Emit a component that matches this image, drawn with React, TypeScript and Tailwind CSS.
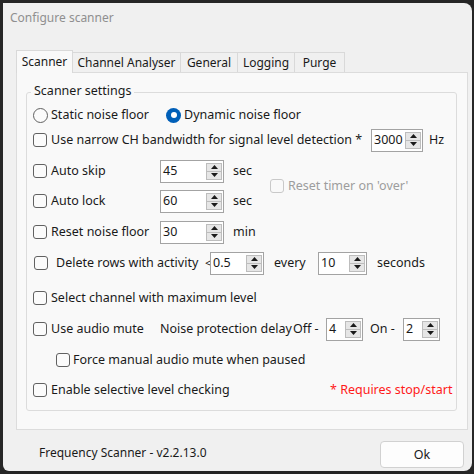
import React from "react";

function Tri({ down }: { down?: boolean }) {
  return (
    <svg width="7" height="4" viewBox="0 0 7 4">
      <polygon points={down ? "0,0 7,0 3.5,4" : "0,4 3.5,0 7,4"} fill="#1a1a1a" />
    </svg>
  );
}

function Spin({ value, w }: { value: string; w: string }) {
  return (
    <div className={"flex h-[23px] shrink-0 items-stretch border border-[#a3a3a3] bg-white " + w}>
      <div className="flex flex-1 items-center pl-[2px] leading-[16px]">{value}</div>
      <div className="flex w-[17px] flex-col py-[2px] pr-[1px]">
        <div className="flex flex-1 items-center justify-center border border-[#bdbdbd] bg-[#e6e6e6]">
          <Tri />
        </div>
        <div className="-mt-px flex flex-1 items-center justify-center border border-[#bdbdbd] bg-[#e6e6e6]">
          <Tri down />
        </div>
      </div>
    </div>
  );
}

function Check({ disabled }: { disabled?: boolean }) {
  return (
    <span
      className={
        disabled
          ? "h-[14px] w-[14px] shrink-0 rounded-[3px] border border-[#c9c9c9] bg-[#f9f9f9]"
          : "h-[14px] w-[14px] shrink-0 rounded-[3px] border border-[#616161] bg-[#fbfbfb]"
      }
    />
  );
}

function Radio({ on }: { on?: boolean }) {
  if (on)
    return (
      <span className="flex h-[15px] w-[15px] shrink-0 items-center justify-center rounded-full bg-[#005fb8]">
        <span className="h-[6px] w-[6px] rounded-full bg-white" />
      </span>
    );
  return <span className="h-[15px] w-[15px] shrink-0 rounded-full border border-[#616161] bg-[#fbfbfb]" />;
}

export default function App() {
  return (
    <div className="h-[474px] w-[474px] bg-[#262626] pl-[3px] pt-[3px] font-['Noto_Sans',sans-serif] text-[#1a1a1a]">
      <div className="flex h-[468px] w-[469px] flex-col rounded-tr-[8px] rounded-br-[8px] rounded-bl-[6px] bg-[#f0f0f0]">
        <div className="flex h-[30px] items-center pl-[7px] text-[12px] text-[#8f8f8f]">Configure scanner</div>

        <div className="mt-[17px] flex h-[22px] items-end pl-[13px] text-[12px] leading-[16px]">
          <div className="relative z-10 -mb-px flex h-[23px] w-[57px] items-center justify-center border border-b-0 border-[#d9d9d9] bg-[#f9f9f9]">
            Scanner
          </div>
          <div className="flex h-[20px] w-[108px] items-center justify-center border border-b-0 border-l-0 border-[#d9d9d9] bg-[#f0f0f0] pt-[1px]">
            Channel Analyser
          </div>
          <div className="flex h-[20px] w-[57px] items-center justify-center border border-b-0 border-l-0 border-[#d9d9d9] bg-[#f0f0f0] pt-[1px]">
            General
          </div>
          <div className="flex h-[20px] w-[57px] items-center justify-center border border-b-0 border-l-0 border-[#d9d9d9] bg-[#f0f0f0] pt-[1px]">
            Logging
          </div>
          <div className="flex h-[20px] w-[50px] items-center justify-center border border-b-0 border-l-0 border-[#d9d9d9] bg-[#f0f0f0] pt-[1px]">
            Purge
          </div>
        </div>

        <div className="ml-[13px] h-[358px] w-[452px] border border-[#dcdcdc] bg-[#f9f9f9] pl-[9px] pt-[19px]">
          <div className="relative h-[319px] w-[431px] rounded-[3px] border border-[#dcdcdc] pl-[6px] pt-[10px] text-[12.5px] leading-[16px]">
            <span className="absolute -top-[11px] left-[4px] bg-[#f9f9f9] px-[3px] leading-[18px]">Scanner settings</span>

            {/* radio row */}
            <div className="flex h-[24px] items-center">
              <div className="flex w-[133px] items-center gap-[3px]">
                <Radio />
                <span>Static noise floor</span>
              </div>
              <div className="flex items-center gap-[3px]">
                <Radio on />
                <span>Dynamic noise floor</span>
              </div>
            </div>

            {/* narrow */}
            <div className="mt-[1px] flex h-[24px] items-center">
              <div className="flex w-[338px] items-center gap-[4px]">
                <Check />
                <span>Use narrow CH bandwidth for signal level detection *</span>
              </div>
              <Spin value="3000" w="w-[52px]" />
              <span className="ml-[6px]">Hz</span>
            </div>

            {/* auto skip / auto lock */}
            <div className="mt-[7px] flex">
              <div className="flex w-[237px] flex-col">
                <div className="flex h-[24px] items-center">
                  <div className="flex w-[127px] items-center gap-[4px]">
                    <Check />
                    <span>Auto skip</span>
                  </div>
                  <Spin value="45" w="w-[64px]" />
                  <span className="ml-[9px]">sec</span>
                </div>
                <div className="mt-[6px] flex h-[24px] items-center">
                  <div className="flex w-[127px] items-center gap-[4px]">
                    <Check />
                    <span>Auto lock</span>
                  </div>
                  <Spin value="60" w="w-[64px]" />
                  <span className="ml-[9px]">sec</span>
                </div>
              </div>
              <div className="flex items-center gap-[4px] text-[#9d9d9d]">
                <Check disabled />
                <span>Reset timer on 'over'</span>
              </div>
            </div>

            {/* reset noise floor */}
            <div className="mt-[7px] flex h-[24px] items-center">
              <div className="flex w-[127px] items-center gap-[4px]">
                <Check />
                <span>Reset noise floor</span>
              </div>
              <Spin value="30" w="w-[64px]" />
              <span className="ml-[9px]">min</span>
            </div>

            {/* delete rows */}
            <div className="mt-[7px] flex h-[24px] items-center">
              <div className="flex w-[172px] items-center gap-[8px] pl-[1px]">
                <Check />
                <span>Delete rows with activity</span>
              </div>
              <span className="w-[5px] text-[11px]">&lt;</span>
              <Spin value="0.5" w="w-[54px]" />
              <span className="ml-[10px] w-[44px]">every</span>
              <Spin value="10" w="w-[49px]" />
              <span className="ml-[10px]">seconds</span>
            </div>

            {/* select channel */}
            <div className="mt-[11px] flex h-[24px] items-center gap-[4px]">
              <Check />
              <span>Select channel with maximum level</span>
            </div>

            {/* audio mute */}
            <div className="mt-[7px] flex h-[24px] items-center">
              <div className="flex w-[127px] items-center gap-[4px]">
                <Check />
                <span>Use audio mute</span>
              </div>
              <span className="w-[133px] whitespace-nowrap">Noise protection delay</span>
              <span className="relative z-10 w-[33px] bg-[#f9f9f9]">Off -</span>
              <Spin value="4" w="w-[37px]" />
              <span className="ml-[7px] w-[33px]">On -</span>
              <Spin value="2" w="w-[37px]" />
            </div>

            {/* force manual */}
            <div className="mt-[7px] flex h-[24px] items-center gap-[3px] pl-[23px]">
              <Check />
              <span>Force manual audio mute when paused</span>
            </div>

            {/* enable selective */}
            <div className="mt-[6px] flex h-[24px] items-center">
              <div className="flex w-[297px] items-center gap-[4px]">
                <Check />
                <span>Enable selective level checking</span>
              </div>
              <span className="text-[#ff1a1a]">* Requires stop/start</span>
            </div>
          </div>
        </div>

        <div className="mt-[11px] flex h-[27px] items-start">
          <span className="mt-[4px] pl-[36px] text-[12px] leading-[16px]">Frequency Scanner - v2.2.13.0</span>
          <button className="ml-auto mr-[8px] h-[27px] w-[84px] rounded-[4px] border border-[#d1d1d1] bg-[#fdfdfd] text-[12.5px] leading-[16px] text-[#1a1a1a]">
            Ok
          </button>
        </div>
      </div>
    </div>
  );
}
